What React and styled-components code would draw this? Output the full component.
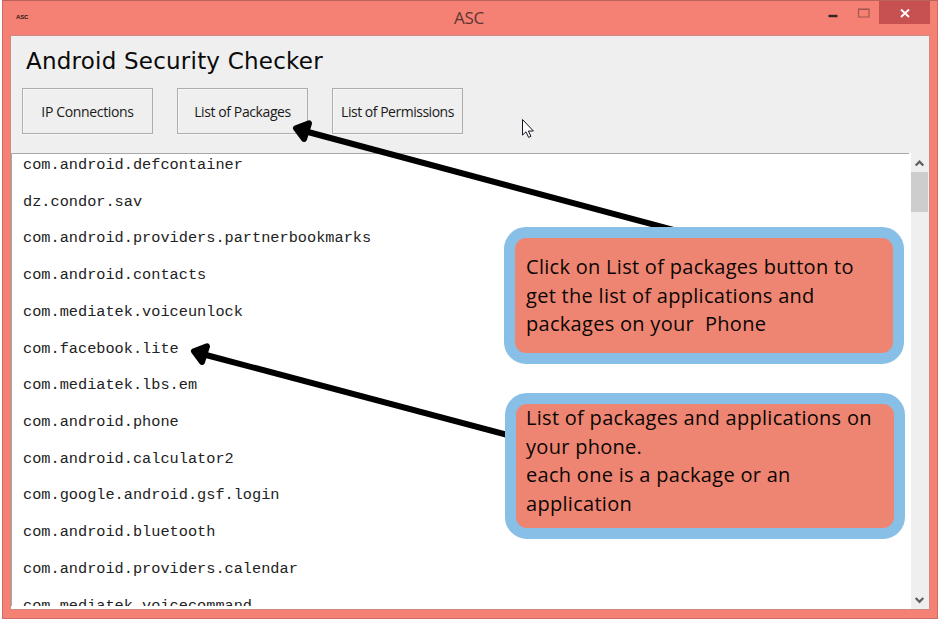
import React from "react";
import styled, { createGlobalStyle } from "styled-components";

const GlobalStyle = createGlobalStyle`
  body { margin: 0; background: #fff; overflow: hidden; }
  * { box-sizing: border-box; }
`;

const Stage = styled.main`
  position: relative;
  width: 938px;
  height: 619px;
  padding-left: 2px;
  background: #fff;
  overflow: hidden;
`;

const Window = styled.section`
  display: flex;
  flex-direction: column;
  height: 619px;
  padding: 0 7px 8px;
  background: #f58174;
  border: 1px solid #cf6c62;
  border-top-color: #b9645b;
`;

const TitleBar = styled.header`
  display: grid;
  grid-template-columns: 129px 1fr 131px;
  height: 34px;
  flex: none;
`;

const AppBadge = styled.span`
  padding: 12px 0 0 6px;
  font: 700 6px/8px "Liberation Sans", Arial, sans-serif;
  letter-spacing: -0.2px;
  color: #2a1513;
`;

const WindowTitle = styled.h1`
  margin: 0;
  text-align: center;
  font: 400 17px/34px "Open Sans", sans-serif;
  letter-spacing: -0.3px;
  color: #5e3532;
`;

const WindowControls = styled.div`
  display: flex;
  justify-content: flex-end;
  align-items: flex-start;
`;

const ControlButton = styled.button`
  display: block;
  width: ${(p) => p.$width}px;
  height: 23px;
  padding: 0;
  border: 0;
  background: ${(p) => (p.$danger ? "#c75050" : "transparent")};
  svg { display: block; }
`;

const Client = styled.div`
  display: flex;
  flex-direction: column;
  flex: 1;
  min-height: 0;
  background: #efefef;
  border: 1px solid #d08a84;
`;

const Header = styled.div`
  flex: none;
  height: 117px;
  padding: 8px 0 0 11px;
`;

const Heading = styled.h2`
  margin: 0 0 0 4px;
  font: 400 23px/34px "DejaVu Sans", Verdana, sans-serif;
  letter-spacing: 0.22px;
  white-space: nowrap;
  color: #0a0a0a;
`;

const ButtonRow = styled.div`
  display: flex;
  gap: 24px;
  margin-top: 10px;
`;

const ActionButton = styled.button`
  width: 131px;
  height: 46px;
  padding: 1px 0 0;
  border: 1px solid #adadad;
  box-shadow: inset 1px 1px 0 #f7f7f7, 0 1px 0 #f7f7f7;
  background: #efefef;
  font: 400 14px/20px "Open Sans", sans-serif;
  letter-spacing: ${(p) => p.$tracking}px;
  white-space: nowrap;
  color: #1a1a1a;
`;

const Body = styled.div`
  display: flex;
  flex: 1;
  min-height: 0;
  background: #fff;
`;

const PackageList = styled.ul`
  flex: 1;
  margin: 0;
  padding: 1px 0 0 11px;
  border: 1px solid #a9a9a9;
  border-width: 1px 0 0 1px;
  height: 453px;
  overflow: hidden;
  list-style: none;
`;

const PackageItem = styled.li`
  height: 36.72px;
  font: 400 15.28px/20px "Liberation Mono", "Courier New", monospace;
  color: #222;
`;

const ScrollTrack = styled.div`
  display: flex;
  flex-direction: column;
  width: 18px;
  margin-left: 2px;
  background: #efefef;
  svg { display: block; }
`;

const ScrollThumb = styled.div`
  width: 17px;
  height: 40px;
  margin-bottom: auto;
  background: #cdcdcd;
`;

const Callout = styled.aside`
  position: absolute;
  left: ${(p) => p.$left}px;
  top: ${(p) => p.$top}px;
  width: 400px;
  height: ${(p) => p.$height}px;
  padding: ${(p) => p.$pad};
  border: 11px solid #88bfe6;
  border-radius: 22px;
  background: #ee8572;
  color: #0b0504;
  font: 400 20px/28.7px "Open Sans", sans-serif;
  letter-spacing: 0.29px;
  white-space: pre;
`;

const Overlay = styled.svg`
  position: absolute;
  left: 0;
  top: 0;
  pointer-events: none;
`;

const packages = [
  "com.android.defcontainer",
  "dz.condor.sav",
  "com.android.providers.partnerbookmarks",
  "com.android.contacts",
  "com.mediatek.voiceunlock",
  "com.facebook.lite",
  "com.mediatek.lbs.em",
  "com.android.phone",
  "com.android.calculator2",
  "com.google.android.gsf.login",
  "com.android.bluetooth",
  "com.android.providers.calendar",
  "com.mediatek.voicecommand",
];

const actions = [
  { label: "IP Connections", tracking: -0.35 },
  { label: "List of Packages", tracking: -0.4 },
  { label: "List of Permissions", tracking: -0.48 },
];

const Arrow = ({ x, y, dx, dy }) => (
  <g transform={`translate(${x} ${y})`} stroke="#000" strokeLinejoin="round">
    <path d={`M15 4 L${dx} ${dy}`} strokeWidth="6" fill="none" />
    <path d="M3 0.2 L16 -4.6 L11 11 Z" strokeWidth="6" />
  </g>
);

export default function App() {
  return (
    <Stage>
      <GlobalStyle />
      <Window>
        <TitleBar>
          <AppBadge>ASC</AppBadge>
          <WindowTitle>ASC</WindowTitle>
          <WindowControls>
            <ControlButton $width={31} aria-label="Minimize">
              <svg width="31" height="23"><path d="M11.5 15h9" stroke="#2f2724" strokeWidth="2.4" /></svg>
            </ControlButton>
            <ControlButton $width={31} aria-label="Maximize">
              <svg width="31" height="23"><path d="M10.5 8.5h10.5v7.5H10.5z" fill="none" stroke="#a4574f" strokeWidth="1.2" /><path d="M10 8.2h11.5" stroke="#a4574f" strokeWidth="1.6" /></svg>
            </ControlButton>
            <ControlButton $width={51} $danger aria-label="Close">
              <svg width="51" height="23"><path d="M22 8.5l8 7.5M30 8.5l-8 7.5" stroke="#fff" strokeWidth="1.8" /></svg>
            </ControlButton>
          </WindowControls>
        </TitleBar>
        <Client>
          <Header>
            <Heading>Android Security Checker</Heading>
            <ButtonRow>
              {actions.map((a) => (
                <ActionButton key={a.label} $tracking={a.tracking}>{a.label}</ActionButton>
              ))}
            </ButtonRow>
          </Header>
          <Body>
            <PackageList>
              {packages.map((name) => <PackageItem key={name}>{name}</PackageItem>)}
            </PackageList>
            <ScrollTrack>
              <svg width="17" height="19"><path d="M4.7 12.5L8.5 8.7l3.8 3.8" fill="none" stroke="#606060" strokeWidth="2.3" /></svg>
              <ScrollThumb />
              <svg width="17" height="18"><path d="M4.7 7L8.5 10.8 12.3 7" fill="none" stroke="#606060" strokeWidth="2.3" /></svg>
            </ScrollTrack>
          </Body>
        </Client>
      </Window>
      <Overlay width="938" height="619">
        <Arrow x={293} y={128} dx={385} dy={103.2} />
        <Arrow x={191} y={351} dx={320} dy={84.8} />
        <path d="M522.5 119.5v15.6l3.5-3.3 2.6 5.6 2.3-1.1-2.5-5.3h5z" fill="#fff" stroke="#151520" />
      </Overlay>
      <Callout $left={504} $top={227} $height={137} $pad="15px 0 0 11px">
        {"Click on List of packages button to\nget the list of applications and\npackages on your  Phone"}
      </Callout>
      <Callout $left={505} $top={393} $height={146} $pad="0 0 0 10px">
        {"List of packages and applications on\nyour phone.\neach one is a package or an\napplication"}
      </Callout>
    </Stage>
  );
}
